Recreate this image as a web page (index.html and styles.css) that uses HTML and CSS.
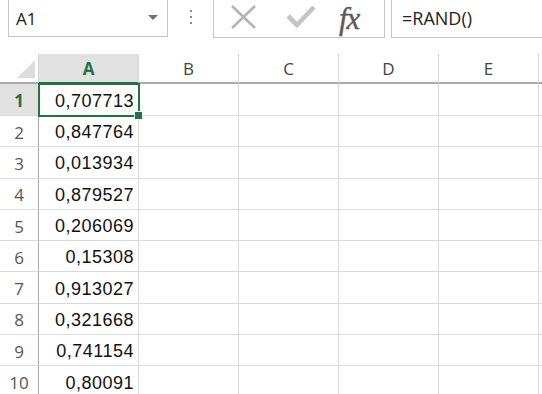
FILE: index.html
```html
<!DOCTYPE html>
<html>
<head>
<meta charset="utf-8">
<link rel="stylesheet" href="styles.css">
</head>
<body>
<div class="toolbar">
  <div class="namebox">
    <span class="name">A1</span>
    <span class="caret"></span>
  </div>
  <div class="dots"><i></i><i></i><i></i></div>
  <div class="fbuttons">
    <svg class="ico-x" width="30" height="24" viewBox="0 0 30 24"><path d="M3 1 L26 23 M26 1 L3 23" stroke="#b4b4b4" stroke-width="2.6" fill="none"/></svg>
    <svg class="ico-check" width="32" height="24" viewBox="0 0 32 24"><path d="M3 11 L12 20 L29 2" stroke="#c4c4c4" stroke-width="4.6" fill="none"/></svg>
    <span class="fx">fx</span>
  </div>
  <div class="finput">=RAND()</div>
</div>
<div class="sheet">
  <div class="corner"><span class="tri"></span></div>
  <div class="ch sel">A</div>
  <div class="ch">B</div>
  <div class="ch">C</div>
  <div class="ch">D</div>
  <div class="ch">E</div>
  <div class="ch rest"></div>

  <div class="rh sel">1</div><div class="c active">0,707713<span class="handle"></span></div><div class="c"></div><div class="c"></div><div class="c"></div><div class="c"></div><div class="c rest"></div>
  <div class="rh">2</div><div class="c">0,847764</div><div class="c"></div><div class="c"></div><div class="c"></div><div class="c"></div><div class="c rest"></div>
  <div class="rh">3</div><div class="c">0,013934</div><div class="c"></div><div class="c"></div><div class="c"></div><div class="c"></div><div class="c rest"></div>
  <div class="rh">4</div><div class="c">0,879527</div><div class="c"></div><div class="c"></div><div class="c"></div><div class="c"></div><div class="c rest"></div>
  <div class="rh">5</div><div class="c">0,206069</div><div class="c"></div><div class="c"></div><div class="c"></div><div class="c"></div><div class="c rest"></div>
  <div class="rh">6</div><div class="c">0,15308</div><div class="c"></div><div class="c"></div><div class="c"></div><div class="c"></div><div class="c rest"></div>
  <div class="rh">7</div><div class="c">0,913027</div><div class="c"></div><div class="c"></div><div class="c"></div><div class="c"></div><div class="c rest"></div>
  <div class="rh">8</div><div class="c">0,321668</div><div class="c"></div><div class="c"></div><div class="c"></div><div class="c"></div><div class="c rest"></div>
  <div class="rh">9</div><div class="c">0,741154</div><div class="c"></div><div class="c"></div><div class="c"></div><div class="c"></div><div class="c rest"></div>
  <div class="rh">10</div><div class="c">0,80091</div><div class="c"></div><div class="c"></div><div class="c"></div><div class="c"></div><div class="c rest"></div>
</div>
</body>
</html>
```
FILE: styles.css
```css
html, body {
  margin: 0;
  padding: 0;
  background: #fff;
  overflow: hidden;
  width: 542px;
  height: 394px;
}
body {
  font-family: "Open Sans", "Noto Sans", sans-serif;
  color: #222;
}
.toolbar {
  display: flex;
  align-items: flex-start;
  height: 54px;
}
.namebox {
  margin-left: 8px;
  margin-top: -1px;
  height: 38px;
  border: 1px solid #c6c6c6;
  display: flex;
  align-items: center;
  justify-content: space-between;
  padding: 0 9px 0 7px;
  box-sizing: border-box;
  width: 160px;
}
.name {
  font-size: 17px;
  color: #222;
}
.caret {
  width: 0;
  height: 0;
  border-left: 5px solid transparent;
  border-right: 5px solid transparent;
  border-top: 5px solid #707070;
  margin-top: -2px;
}
.dots {
  width: 45px;
  display: flex;
  flex-direction: column;
  align-items: center;
  gap: 4px;
  padding-top: 10px;
}
.dots i {
  display: block;
  width: 2px;
  height: 2px;
  background: #8a8a8a;
}
.fbuttons {
  margin-top: -1px;
  width: 172px;
  height: 39px;
  box-sizing: border-box;
  border: 1px solid #c6c6c6;
  border-top: none;
  display: flex;
  align-items: center;
  padding-left: 15px;
}
.ico-x { margin-right: 26px; margin-top: -2px; }
.ico-check { margin-right: 22px; margin-top: -2px; }
.fx {
  font-family: "Liberation Serif", "DejaVu Serif", serif;
  font-style: italic;
  font-size: 31px;
  line-height: 31px;
  color: #5a5a5a;
  margin-top: 0;
  letter-spacing: -1px;
  -webkit-text-stroke: 0.4px #5a5a5a;
}
.finput {
  margin-left: 6px;
  margin-top: -1px;
  flex: 1;
  height: 39px;
  box-sizing: border-box;
  border: 1px solid #c6c6c6;
  border-right: none;
  font-size: 18px;
  padding-left: 10px;
  line-height: 37px;
  color: #222;
}
.sheet {
  display: grid;
  grid-template-columns: 39px 100px 100px 100px 100px 100px 3px;
  grid-template-rows: 30px 32px repeat(9, 31.3px);
}
.corner {
  position: relative;
  border-right: 1px solid #d4d4d4;
  border-bottom: 2px solid #ababab;
  box-sizing: border-box;
}
.tri {
  position: absolute;
  right: 3px;
  bottom: 4px;
  width: 0;
  height: 0;
  border-left: 18px solid transparent;
  border-bottom: 18px solid #dcdcdc;
}
.ch {
  box-sizing: border-box;
  border-right: 1px solid #dadada;
  border-bottom: 2px solid #ababab;
  font-size: 17px;
  color: #444;
  display: flex;
  align-items: center;
  justify-content: center;
  padding-top: 1px;
}
.ch.sel {
  background: #e1e1e1;
  color: #217346;
  font-weight: bold;
  border-bottom-color: #217346;
}
.ch.rest { border-right: none; }
.rh {
  box-sizing: border-box;
  border-right: 1px solid #ababab;
  border-bottom: 1px solid #dadada;
  font-size: 17px;
  color: #555;
  display: flex;
  align-items: center;
  justify-content: center;
  padding-top: 2px;
}
.rh.sel {
  background: #e1e1e1;
  color: #217346;
  font-weight: bold;
  border-right-color: #217346;
}
.c {
  box-sizing: border-box;
  border-right: 1px solid #dadada;
  border-bottom: 1px solid #dadada;
  font-family: "Liberation Sans", Arial, sans-serif;
  font-size: 18px;
  letter-spacing: 0.5px;
  color: #111;
  display: flex;
  align-items: center;
  justify-content: flex-end;
  padding-right: 4px;
  padding-top: 3px;
}
.c.rest { border-right: none; padding: 0; }
.c.active {
  position: relative;
  outline: 2px solid #217346;
  outline-offset: -1px;
  z-index: 1;
}
.handle {
  position: absolute;
  right: -5px;
  bottom: -5px;
  width: 7px;
  height: 7px;
  background: #217346;
  border: 1px solid #fff;
}
```
